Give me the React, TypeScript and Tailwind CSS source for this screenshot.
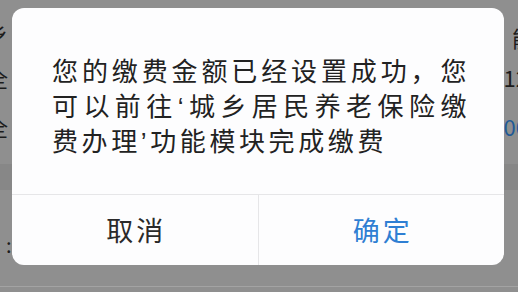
import React from "react";

const font = { fontFamily: '"Noto Sans CJK SC", "Noto Sans", sans-serif' };

// dimmed page behind the dialog, only its edges show
const BackgroundPage: React.FC = () => {
  return (
    <div className="flex h-full w-full flex-col bg-[#8f8f8f] text-[#1c1c1c]">
      <div className="flex h-[52px] items-end justify-between pb-[4px] text-[22px] ml-[-14px] mr-[-16px]">
        <span>乡</span>
        <span className="mb-[-6px]">能</span>
      </div>
      <div className="flex h-[50px] items-center justify-between text-[22px] ml-[-14px] mr-[-10px]">
        <span>全</span>
        <span>12</span>
      </div>
      <div className="flex h-[48px] items-center justify-between text-[22px] ml-[-14px] mr-[-10px]">
        <span>全</span>
        <span className="text-[#1f5a96]">00</span>
      </div>
      <div className="h-[14px]" />
      <div className="h-[26px] bg-[#878787]" />
      <div className="flex h-[96px] items-center pl-[6px] pt-[14px] text-[20px] leading-none">
        <span>:</span>
      </div>
      <div className="flex-1 border-t border-[#a3a3a3]" />
    </div>
  );
};

const quote = { fontFamily: '"Liberation Sans", sans-serif' };

export default function App() {
  return (
    <div className="relative h-[292px] w-[518px] overflow-hidden" style={font}>
      <BackgroundPage />

      {/* dialog */}
      <div className="absolute left-[12px] top-[8px] flex h-[257px] w-[492px] flex-col overflow-hidden rounded-[12px] bg-[#fdfdfe]">
        <p className="h-[186px] pl-[40px] pr-[34px] pt-[44px] text-justify text-[26px] leading-[35px] tracking-[3.6px] text-[#222222]">
          您的缴费金额已经设置成功，您可以前往<span className="leading-[0px]" style={quote}>‘</span>城乡居民养老保险缴费办理<span className="leading-[0px]" style={quote}>’</span>功能模块完成缴费
        </p>
        <div className="flex flex-1 border-t border-[#e6e6e8]">
          <button className="flex flex-1 items-center justify-center pl-[3px] text-[27px] tracking-[3px] text-[#2a2a2a]">
            取消
          </button>
          <div className="w-px bg-[#e6e6e8]" />
          <button className="flex flex-1 items-center justify-center pl-[3px] text-[27px] tracking-[3px] text-[#2f7fd3]">
            确定
          </button>
        </div>
      </div>
    </div>
  );
}
